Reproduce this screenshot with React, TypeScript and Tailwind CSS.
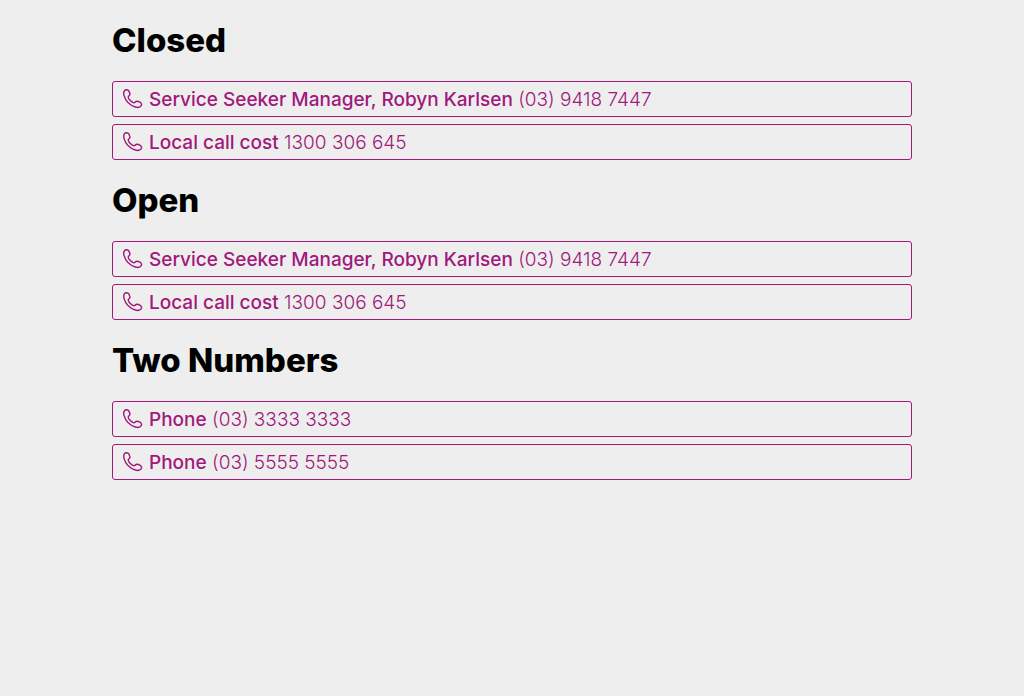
type Phone = { label: string; number: string };

const sections: { title: string; phones: Phone[] }[] = [
  {
    title: 'Closed',
    phones: [
      { label: 'Service Seeker Manager, Robyn Karlsen', number: '(03) 9418 7447' },
      { label: 'Local call cost', number: '1300 306 645' },
    ],
  },
  {
    title: 'Open',
    phones: [
      { label: 'Service Seeker Manager, Robyn Karlsen', number: '(03) 9418 7447' },
      { label: 'Local call cost', number: '1300 306 645' },
    ],
  },
  {
    title: 'Two Numbers',
    phones: [
      { label: 'Phone', number: '(03) 3333 3333' },
      { label: 'Phone', number: '(03) 5555 5555' },
    ],
  },
];

function PhoneIcon() {
  return (
    <svg viewBox="0 0 20 20" className="size-5 shrink-0" fill="none" stroke="currentColor" strokeWidth="1.4" strokeLinecap="round" strokeLinejoin="round" aria-hidden="true">
      <path d="M1.7 1.5 C2.9 .3 4.9 .4 5.8 1.9 L6.6 3.6 C7.3 5 7 6 6 6.8 C5.1 7.5 5.1 8.3 5.6 9.3 C6.5 11 8 12.4 9.8 13.4 C10.9 13.9 11.6 13.8 12.3 13 C13.1 12.1 14.3 12 15.5 12.5 L17.2 13.3 C18.7 14 19 15.9 17.9 17.1 C16.6 18.5 14.5 18.7 12.3 18 C6.8 16.2 2.5 11.9 1 6.4 C.5 4.5 .5 2.7 1.7 1.5 Z" />
    </svg>
  );
}

function PhoneLink({ label, number }: Phone) {
  return (
    <a
      href={`tel:${number.replace(/[^0-9]/g, '')}`}
      className="flex h-9 items-center gap-1.5 rounded-[3px] border border-[#a0197b] px-2.5 text-[19px] leading-6 text-[#a0197b]"
    >
      <PhoneIcon />
      <span className="pt-0.5">
        <span className="font-medium">{label}</span> <span className="font-light">{number}</span>
      </span>
    </a>
  );
}

export default function App() {
  return (
    <div className="min-h-screen bg-[#eeeeee] font-['Inter','Liberation_Sans',sans-serif]">
      <main className="mx-auto max-w-[800px] pt-5">
        {sections.map((section) => (
          <section key={section.title} className="mb-5">
            <h2 className="mb-[21px] text-[33px] leading-10 font-extrabold text-black">{section.title}</h2>
            <ul className="flex flex-col gap-[7px]">
              {section.phones.map((phone) => (
                <li key={phone.number}>
                  <PhoneLink {...phone} />
                </li>
              ))}
            </ul>
          </section>
        ))}
      </main>
    </div>
  );
}
